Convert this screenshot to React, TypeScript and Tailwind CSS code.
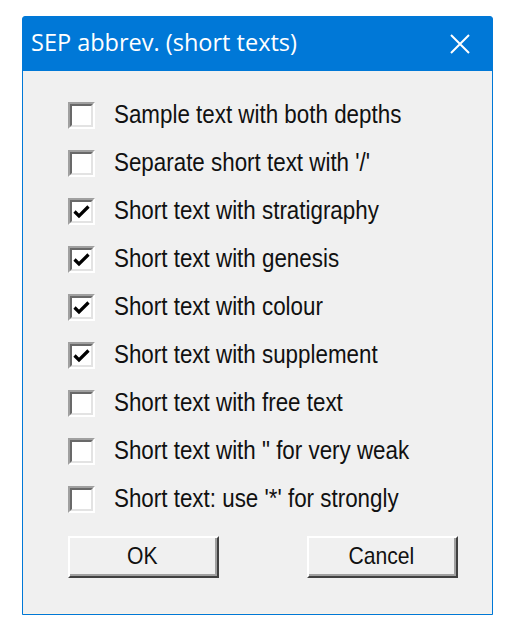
import React from "react"

const options = [
  { label: "Sample text with both depths", checked: false },
  { label: "Separate short text with '/'", checked: false },
  { label: "Short text with stratigraphy", checked: true },
  { label: "Short text with genesis", checked: true },
  { label: "Short text with colour", checked: true },
  { label: "Short text with supplement", checked: true },
  { label: "Short text with free text", checked: false },
  { label: 'Short text with " for very weak', checked: false },
  { label: "Short text: use '*' for strongly", checked: false },
]

function CheckBox({ checked }: { checked: boolean }) {
  return (
    <div className="size-[27px] shrink-0 border-2 border-t-[#a0a0a0] border-l-[#a0a0a0] border-b-white border-r-white">
      <div className="flex size-full items-center justify-center border-2 border-t-[#696969] border-l-[#696969] border-b-[#e3e3e3] border-r-[#e3e3e3] bg-white">
        {checked && (
          <svg width="17" height="15" viewBox="0 0 17 15">
            <path d="M1.5 7.5 L6 12 L15.5 2.5" fill="none" stroke="#000" strokeWidth="3.2" />
          </svg>
        )}
      </div>
    </div>
  )
}

function Button({ children }: { children: React.ReactNode }) {
  return (
    <button className="h-[42px] w-[151px] border-2 border-t-white border-l-white border-b-[#404040] border-r-[#404040] bg-[#f0f0f0]">
      <div className="flex size-full items-center justify-center border-b-2 border-r-2 border-[#a0a0a0] text-[24px] text-[#111]">
        <span className="inline-block [transform:scaleX(0.88)]">{children}</span>
      </div>
    </button>
  )
}

export default function App() {
  return (
    <div className="h-[631px] w-[514px] bg-white pl-[22px] pt-[16px]">
      <div className="flex h-[599px] w-[471px] flex-col rounded-t-[3px] border border-[#0078d7] bg-[#0078d7]">
        <div className="flex h-[54px] shrink-0 items-center justify-between pl-[8px] pr-[22px]">
          <span className="pb-[2px] text-[23.5px] text-white" style={{ fontFamily: '"Open Sans", "Noto Sans", sans-serif' }}>
            SEP abbrev. (short texts)
          </span>
          <svg width="20" height="20" viewBox="0 0 20 20">
            <path d="M1 1 L19 19 M19 1 L1 19" stroke="#fff" strokeWidth="2" />
          </svg>
        </div>
        <div
          className="flex flex-1 flex-col border-b border-[#fdf3e4] bg-[#f0f0f0] pl-[45px] pr-[34px] pt-[20px]"
          style={{ fontFamily: '"Liberation Sans", Arial, sans-serif' }}
        >
          {options.map((o) => (
            <div key={o.label} className="flex h-[48px] items-center gap-[19px]">
              <CheckBox checked={o.checked} />
              <span className="inline-block origin-left whitespace-nowrap text-[25px] text-[#111] [transform:scaleX(0.895)]">
                {o.label}
              </span>
            </div>
          ))}
          <div className="mt-[13px] flex justify-between">
            <Button>OK</Button>
            <Button>Cancel</Button>
          </div>
        </div>
      </div>
    </div>
  )
}
